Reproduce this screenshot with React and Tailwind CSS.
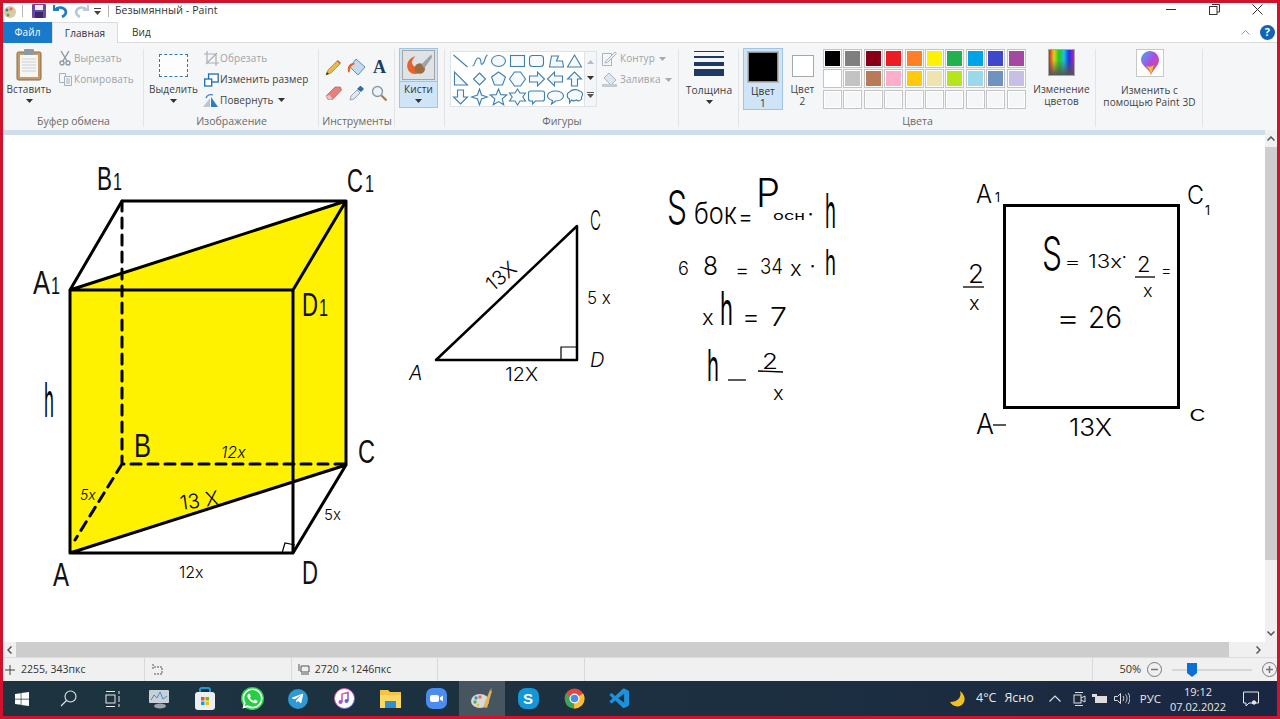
import React from "react";
import { FaWhatsapp, FaTelegramPlane, FaWindows } from "react-icons/fa";
import { VscVscode } from "react-icons/vsc";

const Caret = ({ c = "#333" }) => (
  <svg width="7" height="4" viewBox="0 0 7 4"><path d="M0 0h7L3.5 4z" fill={c} /></svg>
);

function Group({ w, label, children, noBorder }) {
  return (
    <div className={`${w} h-full flex flex-col shrink-0 relative`}>
      <div className="flex-1 flex min-h-0">{children}</div>
      <div className="h-[16px] text-center text-[10.500px] leading-[14px] text-[#6a6a6a]">{label}</div>
      {!noBorder && <div className="absolute right-0 top-[3px] bottom-[3px] w-px bg-[#e1e3e6]" />}
    </div>
  );
}

const Cut = () => (
  <svg width="12" height="15" viewBox="0 0 12 15" fill="none" stroke="#8d9aa6" strokeWidth="1.4">
    <path d="M2 0l6 10M10 0L4 10" /><circle cx="3" cy="12" r="2" /><circle cx="9" cy="12" r="2" />
  </svg>
);
const Copy = () => (
  <svg width="15" height="15" viewBox="0 0 15 15" fill="#f4f6f8" stroke="#a4b0bc">
    <path d="M1.5 1.5h6v9h-6z" /><path d="M6.5 4.5h7v9h-7z" /><path d="M8 7h4M8 9h4M8 11h4" />
  </svg>
);
const Crop = () => (
  <svg width="15" height="15" viewBox="0 0 15 15" fill="none" stroke="#a7b0ba" strokeWidth="1.2">
    <path d="M3 0v12h12M0 3h12v12M2 13L13 2" />
  </svg>
);
const Resize = () => (
  <svg width="15" height="14" viewBox="0 0 15 14" fill="#fff" stroke="#1f6eb5" strokeWidth="1.3">
    <rect x="4.6" y="1" width="9.6" height="8" /><rect x="0.7" y="6" width="7" height="7" />
  </svg>
);
const Rotate = () => (
  <svg width="16" height="15" viewBox="0 0 16 15">
    <path d="M8 4l7 10H8z" fill="#2f7dbd" /><path d="M7 5L0 14h7z" fill="#b9c7d2" />
    <path d="M3 5c1-3 4-4 7-3" stroke="#2f7dbd" fill="none" strokeWidth="1.3" />
  </svg>
);

const Pencil = () => (
  <svg width="17" height="17" viewBox="0 0 17 17">
    <path d="M1 16l2-5 9-9 3 3-9 9z" fill="#e9b949" stroke="#a67c2c" strokeWidth=".7" />
    <path d="M12 2l3 3 1-1-3-3z" fill="#d05c4d" /><path d="M1 16l1-3 2 2z" fill="#333" />
  </svg>
);
const Bucket = () => (
  <svg width="20" height="19" viewBox="0 0 20 19">
    <path d="M9 1l9 8-7 8-8-8z" fill="#c6dcec" stroke="#5e8db2" />
    <path d="M7 5C2 5 0 9 1 14c1 1 2 0 2-2 0-3 2-5 5-6z" fill="#e8622b" />
  </svg>
);
const TextA = () => (
  <span className="font-['Liberation_Serif',serif] font-bold text-[18px] leading-none text-[#1d3e63]">A</span>
);
const Eraser = () => (
  <svg width="17" height="15" viewBox="0 0 17 15">
    <path d="M1 10L10 1h5.5l1 3-9 9.5H3z" fill="#e77f80" stroke="#b85a5c" strokeWidth=".7" />
    <path d="M1 10l2.5 3.5h4L5 9z" fill="#f1c0c0" />
  </svg>
);
const Picker = () => (
  <svg width="17" height="17" viewBox="0 0 17 17">
    <path d="M2 15l1-4 6-6 3 3-6 6z" fill="#dfe8ef" stroke="#7f94a6" strokeWidth=".8" />
    <path d="M9 4l3-3 1 0 3 3-3 3z" fill="#2e6ea6" />
  </svg>
);
const Mag = () => (
  <svg width="17" height="17" viewBox="0 0 17 17" fill="none">
    <circle cx="6.5" cy="6.5" r="5" stroke="#8c98a4" strokeWidth="1.4" fill="#eaf3fa" />
    <path d="M10.5 10.5l5 5" stroke="#b07a3d" strokeWidth="2.2" />
  </svg>
);

const shapePaths = [
  <path d="M2 3l14 12" />,
  <path d="M2 14c3 0 2-8 6-8s1 8 4 6 2-8 5-9" />,
  <ellipse cx="9" cy="9" rx="7" ry="5.5" />,
  <rect x="2" y="3.5" width="14" height="11" />,
  <rect x="2" y="3.5" width="14" height="11" rx="3" />,
  <path d="M3 15l2-11h7l-2 5h6l1 6z" />,
  <path d="M9 3l7 12H2z" />,
  <path d="M3 2v13h13z" />,
  <path d="M9 3l6 6-6 6-6-6z" />,
  <path d="M9 2l7 5-3 8H5L2 7z" />,
  <path d="M6 2h6l5 7-5 7H6L1 9z" />,
  <path d="M2 6h8V2l7 7-7 7v-4H2z" />,
  <path d="M16 6H8V2L1 9l7 7v-4h8z" />,
  <path d="M6 16V9H2l7-7 7 7h-4v7z" />,
  <path d="M6 2v7H2l7 7 7-7h-4V2z" />,
  <path d="M9 1l2 6 6 2-6 2-2 6-2-6-6-2 6-2z" />,
  <path d="M9 1l2.3 5.6 6 .4-4.600 3.900 1.500 5.900L9 13.600 3.800 16.800l1.500-5.900L.7 7l6-.4z" />,
  <path d="M9 1l2.500 4H17l-2.700 4L17 13h-5.500L9 17l-2.500-4H1l2.700-4L1 5h5.500z" />,
  <path d="M3 3h12a2 2 0 012 2v6a2 2 0 01-2 2H8l-3 3v-3H3a2 2 0 01-2-2V5a2 2 0 012-2z" />,
  <path d="M9 3c4.500 0 8 2 8 5s-3.500 5-8 5l-4 3 1-3.500C3 11.500 1 10 1 8c0-3 3.500-5 8-5z" />,
  <path d="M4 4c2-3 8-3 10-1 3 0 4 4 2 6 1 3-3 5-5 3-2 1-4 1-5 0l-2 3v-4C1 10 1 5 4 4z" />,
];

const Swatch = ({ c }) => (
  <div className="w-[19px] h-[19px] border border-[#c4c4c4] bg-white p-px">
    <div className="w-full h-full" style={c ? { background: c } : { background: "#f5f6f7" }} />
  </div>
);
const row1 = ["#000000", "#7f7f7f", "#880015", "#ed1c24", "#ff7f27", "#fff200", "#22b14c", "#00a2e8", "#3f48cc", "#a349a4"];
const row2 = ["#ffffff", "#c3c3c3", "#b97a57", "#ffaec9", "#ffc90e", "#efe4b0", "#b5e61d", "#99d9ea", "#7092be", "#c8bfe7"];

function TitleBar() {
  return (
    <div className="h-[19px] flex items-center bg-white shrink-0 relative pb-[3px]">
      <svg width="14" height="15" viewBox="0 0 14 15" className="ml-0">
        <ellipse cx="7" cy="8" rx="6" ry="6" fill="#d9c9a8" /><circle cx="4" cy="6" r="1.500" fill="#2f7dbd" /><circle cx="8" cy="5" r="1.500" fill="#e8703a" /><circle cx="5" cy="11" r="1.500" fill="#5aa84a" />
      </svg>
      <div className="w-px h-[12px] bg-[#b5b5b5] ml-[5px]" />
      <svg width="14" height="14" viewBox="0 0 14 14" className="ml-[9px]"><rect width="14" height="14" rx="1" fill="#6a4a9e" /><rect x="3" y="1" width="8" height="5" fill="#e8eef5" /><rect x="3" y="8" width="8" height="6" fill="#3a2a6a" /></svg>
      <svg width="15" height="14" viewBox="0 0 15 14" fill="none" className="ml-[7px]"><path d="M1 1v5h5" stroke="#1d7cc8" strokeWidth="2.200" /><path d="M2 6c3-4 10-3 11 2 0 3-2 4-4 5" stroke="#1d7cc8" strokeWidth="2.600" /></svg>
      <svg width="15" height="14" viewBox="0 0 15 14" fill="none" className="ml-[6px]"><path d="M14 1v5H9" stroke="#b8c9d8" strokeWidth="2.200" /><path d="M13 6C10 2 3 3 2 8c0 3 2 4 4 5" stroke="#b8c9d8" strokeWidth="2.600" /></svg>
      <div className="ml-[5px] flex flex-col items-center gap-[2px]"><div className="w-[7px] h-px bg-[#444]" /><Caret c="#444" /></div>
      <div className="w-px h-[12px] bg-[#b5b5b5] ml-[7px]" />
      <span className="ml-[6px] text-[10.500px] tracking-[.1px] text-[#333]">Безымянный - Paint</span>
      <div className="ml-auto flex items-center text-[#333] mr-[14px] mb-[3px]">
        <div className="w-[10px] h-px bg-[#333]" />
        <svg width="11" height="11" viewBox="0 0 11 11" fill="#fff" stroke="#333" className="ml-[33px]"><path d="M3 .500h7.500V8H8" /><rect x=".5" y="2.500" width="7.500" height="8" /></svg>
        <svg width="11" height="11" viewBox="0 0 11 11" stroke="#333" className="ml-[32px]"><path d="M.5.500l10 10M10.500.500l-10 10" /></svg>
      </div>
    </div>
  );
}

function Tabs() {
  return (
    <div className="h-[21px] flex bg-white shrink-0 text-[10px] tracking-[.1px] relative border-b border-[#dadbdc]">
      <div className="w-[49px] h-[21px] bg-[#1979ca] text-white flex items-center justify-center">Файл</div>
      <div className="w-[66px] h-[21px] z-10 bg-[#f5f6f7] border border-b-0 border-[#dadbdc] flex items-center justify-center text-[#333]">Главная</div>
      <div className="ml-[14px] flex items-center text-[#333]">Вид</div>
      <div className="ml-auto flex items-center mr-[2px]">
        <svg width="9" height="5" viewBox="0 0 9 5" fill="none" stroke="#999" className="mr-[10px]"><path d="M.5 4.500l4-4 4 4" /></svg>
        <div className="w-[15px] h-[15px] rounded-full bg-[#1564b3] text-white font-bold text-[11px] flex items-center justify-center">?</div>
      </div>
    </div>
  );
}

function SmallRow({ icon, text, disabled, caret }) {
  return (
    <div className="h-[21px] flex items-center">
      <div className="w-[16px] flex justify-center">{icon}</div>
      <span className={`ml-[1px] text-[10px] tracking-[.1px] ${disabled ? "text-[#9fa3a8]" : "text-[#3f3f3f]"}`}>{text}</span>
      {caret && <span className="ml-[4px] mb-[2px]"><Caret /></span>}
    </div>
  );
}

function Ribbon() {
  return (
    <div className="h-[87px] flex bg-[#f5f6f7] shrink-0 pt-[3px]">
      <Group w="w-[141px]" label="Буфер обмена">
        <div className="w-[52px] flex flex-col items-center pt-[3px]">
          <svg width="26" height="32" viewBox="0 0 26 32">
            <rect x="1" y="3" width="24" height="28" rx="1.500" fill="#c49a6c" stroke="#8a6a40" />
            <rect x="4" y="6" width="18" height="22" fill="#f7f7f2" />
            <path d="M6 10h14M6 13h14M6 16h14M6 19h14M6 22h14" stroke="#c9ced3" />
            <rect x="8" y="0" width="10" height="6" rx="1" fill="#8d9aa6" />
          </svg>
          <span className="text-[10px] tracking-[.1px] leading-[14px] text-[#3f3f3f] mt-[1px]">Вставить</span>
          <span className="mt-[3px]"><Caret /></span>
        </div>
        <div className="pl-[2px] pt-[2px] flex flex-col">
          <SmallRow icon={<Cut />} text="Вырезать" disabled />
          <SmallRow icon={<Copy />} text="Копировать" disabled />
        </div>
      </Group>
      <Group w="w-[175px]" label="Изображение">
        <div className="w-[59px] flex flex-col items-center pt-[8px]">
          <div className="w-[29px] h-[23px] border border-dashed border-[#3b76ab] bg-[#fdfdfd]" />
          <span className="text-[10px] tracking-[.1px] leading-[14px] text-[#3f3f3f] mt-[5px]">Выделить</span>
          <span className="mt-[3px]"><Caret /></span>
        </div>
        <div className="pl-0 pt-[2px] flex flex-col">
          <SmallRow icon={<Crop />} text="Обрезать" disabled />
          <SmallRow icon={<Resize />} text="Изменить размер" />
          <SmallRow icon={<Rotate />} text="Повернуть" caret />
        </div>
      </Group>
      <Group w="w-[76px]" label="Инструменты">
        <div className="grid grid-cols-[repeat(3,23px)] grid-rows-[26px_26px] pl-[3px] pt-[8px] justify-items-center items-center">
          <Pencil /><Bucket /><TextA /><Eraser /><Picker /><Mag />
        </div>
      </Group>
      <Group w="w-[50px]" label="">
        <div className="ml-[4px] mt-[2px] w-[39px] h-[60px] bg-[#cfe4f6] border border-[#9cc5e8] flex flex-col items-center">
          <svg width="33" height="30" viewBox="0 0 33 32" className="mt-[1px] bg-[#dfe3e6] border border-[#a5a5a5]">
            <path d="M4 20c-2-7 3-13 9-14-3 3-6 7-2 11 3 3 7 1 7-1l3 3c0 5-6 8-11 7-3-1-5-3-6-6z" fill="#e8622b" />
            <circle cx="18" cy="20" r="6" fill="#9c6b3f" />
            <path d="M20 15L31 4l1 3-9 13z" fill="#9aa3ab" />
          </svg>
          <div className="w-full h-px bg-[#9cc5e8] mt-[1px]" />
          <span className="text-[10px] tracking-[.1px] leading-[14px] text-[#333]">Кисти</span>
          <span className="mt-[3px]"><Caret /></span>
        </div>
      </Group>
      <Group w="w-[234px]" label="Фигуры">
        <div className="ml-[5px] mt-[5px] w-[147px] h-[56px] border border-[#dfe3e7] bg-white flex">
          <div className="w-[133px] grid grid-cols-[repeat(7,19px)] grid-rows-[repeat(3,18px)]">
            {shapePaths.map((p, i) => (
              <svg key={i} width="19" height="18" viewBox="0 0 18 18" fill="#f6fafd" stroke="#3f7fb0" strokeWidth="1.100">{p}</svg>
            ))}
          </div>
          <div className="flex-1 bg-[#f4f5f6] border-l border-[#dfe3e7] flex flex-col items-center justify-around py-[2px]">
            <svg width="7" height="4" viewBox="0 0 7 4"><path d="M0 4h7L3.500 0z" fill="#bbb" /></svg>
            <Caret />
            <div className="flex flex-col items-center gap-[1px]"><div className="w-[7px] h-px bg-[#555]" /><Caret c="#555" /></div>
          </div>
        </div>
        <div className="ml-[5px] pt-[2px] flex flex-col">
          <div className="h-[21px] flex items-center">
            <svg width="15" height="15" viewBox="0 0 15 15" fill="none" stroke="#aab4be"><path d="M.5 2.500h9v12h-9z" /><path d="M4 10l9-9 1.500 1.500-9 9L3 12z" fill="#eef1f4" /></svg>
            <span className="ml-[3px] text-[10px] tracking-[.1px] text-[#9fa3a8]">Контур</span>
            <span className="ml-[4px]"><Caret c="#aaa" /></span>
          </div>
          <div className="h-[21px] flex items-center">
            <svg width="16" height="15" viewBox="0 0 16 15"><path d="M7 1l7 7-5 5-7-7z" fill="#dfe7ee" stroke="#aab4be" /><rect x="0" y="12" width="15" height="3" fill="#c3ccd4" /></svg>
            <span className="ml-[2px] text-[10px] tracking-[.1px] text-[#9fa3a8]">Заливка</span>
            <span className="ml-[4px]"><Caret c="#aaa" /></span>
          </div>
        </div>
      </Group>
      <Group w="w-[60px]" label="">
        <div className="w-full flex flex-col items-center pt-[5px]">
          <div className="w-[30px] h-px bg-[#1f3864]" />
          <div className="w-[30px] h-[2px] bg-[#1f3864] mt-[4px]" />
          <div className="w-[30px] h-[4px] bg-[#1f3864] mt-[4px]" />
          <div className="w-[30px] h-[7px] bg-[#1f3864] mt-[3px]" />
          <span className="text-[10.300px] tracking-[.1px] leading-[14px] text-[#3f3f3f] mt-[7px]">Толщина</span>
          <span className="mt-[3px]"><Caret /></span>
        </div>
      </Group>
      <Group w="w-[357px]" label="Цвета">
        <div className="ml-[4px] mt-[2px] w-[40px] h-[62px] bg-[#cfe4f6] border border-[#9cc5e8] flex flex-col items-center">
          <div className="mt-[3px] w-[30px] h-[30px] bg-black border border-[#8f8f8f] shadow-[0_0_0_1px_#bbb]" />
          <span className="text-[10px] tracking-[.1px] leading-[12px] text-[#333] mt-[3px] text-center">Цвет<br />1</span>
        </div>
        <div className="ml-[0px] mt-[2px] w-[39px] flex flex-col items-center">
          <div className="mt-[7px] w-[22px] h-[22px] bg-white border border-[#a8a8a8]" />
          <span className="text-[10px] tracking-[.1px] leading-[12px] text-[#3f3f3f] mt-[6px] text-center">Цвет<br />2</span>
        </div>
        <div className="mt-[3px] ml-[1px] w-[204px] grid grid-cols-[repeat(10,19px)] gap-x-[1.400px] gap-y-[1.400px] content-start">
          {row1.map((c) => <Swatch key={c} c={c} />)}
          {row2.map((c) => <Swatch key={c} c={c} />)}
          {Array.from({ length: 10 }).map((_, i) => <Swatch key={i} />)}
        </div>
        <div className="flex-1 flex flex-col items-center pt-[3px]">
          <div className="w-[27px] h-[27px] border border-[#a8a8a8] bg-[linear-gradient(90deg,#d81e1e,#e0d020,#1ec81e,#20c0e0,#2030e0,#c020c0)] relative overflow-hidden">
            <div className="absolute inset-0 bg-[linear-gradient(180deg,transparent_40%,#555)]" />
          </div>
          <span className="text-[10px] tracking-[.1px] leading-[12px] text-[#3f3f3f] mt-[7px] text-center">Изменение<br />цветов</span>
        </div>
      </Group>
      <Group w="w-[107px]" label="">
        <div className="w-full flex flex-col items-center pt-[3px]">
          <div className="w-[28px] h-[28px] bg-white border border-[#c8c8c8] flex items-center justify-center">
            <svg width="18" height="24" viewBox="0 0 18 24">
              <defs><linearGradient id="p3d" x1="0" y1="0" x2="1" y2="1"><stop offset="0" stopColor="#3fb3f0" /><stop offset=".5" stopColor="#b048e0" /><stop offset="1" stopColor="#f0503c" /></linearGradient></defs>
              <path d="M9 0c5 0 9 4 9 9 0 6-6 9-8 15C9 18 0 15 0 9c0-5 4-9 9-9z" fill="url(#p3d)" />
              <path d="M10 24c-1-5-3-7-5-9 3 1 6 1 8-1-1 3-2 6-3 10z" fill="#f5c030" />
            </svg>
          </div>
          <span className="text-[10px] tracking-[.1px] leading-[12px] text-[#3f3f3f] mt-[7px] text-center whitespace-nowrap">Изменить с<br />помощью Paint 3D</span>
        </div>
      </Group>
    </div>
  );
}

const Hand = ({ x, y, s = 20, len, w = 300, rot, children, it }) => (
  <text
    x={x}
    y={y}
    fontSize={s}
    fontWeight={w}
    fontStyle={it ? "italic" : "normal"}
    fontFamily="Inter, 'Liberation Sans', sans-serif"
    fill="#000"
    opacity="0.99"
    textLength={len}
    lengthAdjust={len ? "spacingAndGlyphs" : undefined}
    transform={rot ? `rotate(${rot} ${x} ${y})` : undefined}
  >
    {children}
  </text>
);
const Lab = ({ x, y, s = 34, len, children }) => (
  <text x={x} y={y} fontSize={s} fontFamily="'Liberation Sans', sans-serif" fill="#111" textLength={len} lengthAdjust="spacingAndGlyphs">{children}</text>
);

function Drawing() {
  return (
    <svg viewBox="3 135 1262 507" width="1262" height="507" className="block">
      <polygon points="70,290 346,201 346,465 70,553" fill="#fff200" />
      <g stroke="#000" strokeWidth="3" fill="none" strokeLinecap="round" strokeLinejoin="round">
        <path d="M70 290L122 201H346V465L293 553H70V290H293V553M293 290L346 201M70 290L346 201M70 553L346 465" />
        <path d="M122 201V464H346M122 464L75 540" strokeDasharray="10 7" />
      </g>
      <path d="M282 553l3-10 10 2" stroke="#000" strokeWidth="1.200" fill="none" />
      <Lab x={97} y={190} len={15}>B</Lab><Lab x={113} y={190} s={24} len={9}>1</Lab>
      <Lab x={347} y={192} len={16}>C</Lab><Lab x={365} y={192} s={24} len={9}>1</Lab>
      <Lab x={33} y={294} len={17}>A</Lab><Lab x={51} y={294} s={24} len={9}>1</Lab>
      <Lab x={302} y={316} len={16}>D</Lab><Lab x={319} y={316} s={24} len={9}>1</Lab>
      <Lab x={134} y={457} len={17}>B</Lab>
      <Lab x={358} y={463} len={17}>C</Lab>
      <Lab x={53} y={586} len={16}>A</Lab>
      <Lab x={302} y={584} len={16}>D</Lab>
      <Hand x={44} y={417} s={48} w={400} len={10}>h</Hand>
      <Hand x={221} y={458} s={16} it>12x</Hand>
      <Hand x={80} y={500} s={14} it>5x</Hand>
      <Hand x={181} y={510} s={20} rot={-8}>13 X</Hand>
      <Hand x={324} y={520} s={15}>5x</Hand>
      <Hand x={179} y={578} s={16}>12x</Hand>

      <path d="M436 360L577 226V360Z" stroke="#000" strokeWidth="2.500" fill="none" strokeLinejoin="round" />
      <path d="M561 360v-13h16" stroke="#000" strokeWidth="1.200" fill="none" />
      <Hand x={409} y={380} s={20} it>A</Hand>
      <Hand x={590} y={230} s={27} len={11}>C</Hand>
      <Hand x={493} y={292} s={20} rot={-40}>13X</Hand>
      <Hand x={587} y={304} s={17}>5 x</Hand>
      <Hand x={505} y={381} s={18} len={33}>12X</Hand>
      <Hand x={590} y={367} s={20} it>D</Hand>

      <Hand x={667} y={224} s={46} len={20}>S</Hand>
      <Hand x={694} y={224} s={30} len={43}>бок</Hand>
      <Hand x={738} y={225} s={24} len={15}>=</Hand>
      <Hand x={756} y={207} s={40} len={24}>P</Hand>
      <Hand x={773} y={220} s={12} w={400} len={32}>осн</Hand>
      <Hand x={808} y={220} s={16} w={600}>·</Hand>
      <Hand x={825} y={228} s={48} w={400} len={11}>h</Hand>
      <Hand x={678} y={275} s={18}>6</Hand>
      <Hand x={703} y={275} s={26} len={15}>8</Hand>
      <Hand x={735} y={278} s={22}>=</Hand>
      <Hand x={760} y={274} s={22} len={23}>34</Hand>
      <Hand x={790} y={276} s={22}>x</Hand>
      <Hand x={810} y={272} s={16} w={600}>·</Hand>
      <Hand x={825} y={275} s={36} w={400} len={11}>h</Hand>
      <Hand x={702} y={325} s={22}>x</Hand>
      <Hand x={720} y={325} s={46} w={400} len={13}>h</Hand>
      <Hand x={742} y={326} s={26} len={18}>=</Hand>
      <Hand x={770} y={326} s={26} len={17}>7</Hand>
      <Hand x={707} y={381} s={44} w={400} len={12}>h</Hand>
      <path d="M728 380h18" stroke="#000" strokeWidth="1.300" />
      <Hand x={762} y={369} s={22} len={16}>2</Hand>
      <path d="M758 371l25 1" stroke="#000" strokeWidth="1.300" />
      <Hand x={773} y={400} s={20}>x</Hand>

      <rect x="1004.500" y="205.500" width="174" height="202" fill="none" stroke="#000" strokeWidth="3" />
      <Hand x={976} y={203} s={26} len={16}>A</Hand>
      <Hand x={995} y={202} s={13} w={400} len={5}>1</Hand>
      <Hand x={1187} y={204} s={25} len={17}>C</Hand>
      <Hand x={1205} y={215} s={13} w={400} len={5}>1</Hand>
      <Hand x={968} y={283} s={26}>2</Hand>
      <path d="M963 287h21" stroke="#000" strokeWidth="1.300" />
      <Hand x={969} y={310} s={20}>x</Hand>
      <Hand x={1042} y={270} s={46} len={20}>S</Hand>
      <Hand x={1064} y={268} s={18} len={17}>=</Hand>
      <Hand x={1088} y={268} s={18} len={34}>13x</Hand>
      <Hand x={1122} y={262} s={14} w={600}>·</Hand>
      <Hand x={1137} y={272} s={22}>2</Hand>
      <path d="M1135 277h20" stroke="#000" strokeWidth="1.300" />
      <Hand x={1143} y={297} s={18}>x</Hand>
      <Hand x={1161} y={276} s={16}>=</Hand>
      <Hand x={1056} y={328} s={28} len={24}>=</Hand>
      <Hand x={1088} y={328} s={30} len={34}>26</Hand>
      <Hand x={976} y={434} s={28} len={18}>A</Hand>
      <path d="M993 425h13" stroke="#000" strokeWidth="1.300" />
      <Hand x={1189} y={421} s={22} len={17}>c</Hand>
      <Hand x={1069} y={436} s={24} len={43}>13X</Hand>
    </svg>
  );
}

function StatusBar() {
  return (
    <div className="h-[24px] bg-[#f0f0f0] border-t border-[#dcdcdc] flex items-center text-[10.500px] text-[#333] shrink-0">
      <div className="w-[142px] h-full border-r border-[#d9d9d9] flex items-center">
        <svg width="10" height="10" viewBox="0 0 10 10" stroke="#444" className="ml-[2px]"><path d="M5 0v10M0 5h10" /></svg>
        <span className="ml-[6px]">2255, 343пкс</span>
      </div>
      <div className="w-[147px] h-full border-r border-[#d9d9d9] flex items-center">
        <svg width="13" height="11" viewBox="0 0 13 11" fill="none" stroke="#555" className="ml-[5px]"><path d="M3 0v6M4 3h8v7H4" strokeDasharray="2 1" /></svg>
      </div>
      <div className="w-[146px] h-full border-r border-[#d9d9d9] flex items-center">
        <svg width="13" height="11" viewBox="0 0 13 11" fill="none" stroke="#555" className="ml-[5px]"><path d="M2 0v7M4 2h8v6H4zM4 10h8" /></svg>
        <span className="ml-[5px]">2720 × 1246пкс</span>
      </div>
      <div className="w-[147px] h-full border-r border-[#d9d9d9]" />
      <div className="w-[509px] h-full border-r border-[#d9d9d9]" />
      <span className="ml-[26px] text-[11px]">50%</span>
      <svg width="15" height="15" viewBox="0 0 15 15" fill="none" stroke="#777" className="ml-[6px]"><circle cx="7.500" cy="7.500" r="7" /><path d="M4 7.500h7" strokeWidth="1.500" /></svg>
      <div className="ml-[10px] w-[80px] h-[2px] bg-[#d6d6d6] relative">
        <svg width="10" height="14" viewBox="0 0 10 14" className="absolute left-[15px] -top-[6px]"><path d="M0 0h10v10l-5 4-5-4z" fill="#0a6fd6" /></svg>
      </div>
      <svg width="15" height="15" viewBox="0 0 15 15" fill="none" stroke="#777" className="ml-[10px]"><circle cx="7.500" cy="7.500" r="7" /><path d="M4 7.500h7M7.500 4v7" strokeWidth="1.500" /></svg>
    </div>
  );
}

const Tb = ({ children, active, first }) => (
  <div className={`w-[46px] h-full flex items-center justify-center shrink-0 ${active ? "bg-[#46555f]" : ""} ${first ? "-ml-[4px]" : ""}`}>{children}</div>
);

function Taskbar() {
  return (
    <div className="h-[35px] flex items-center bg-[linear-gradient(90deg,#1d3440,#1c2f40_60%,#1a2742)] shrink-0 text-white overflow-hidden">
      <Tb first><FaWindows size={16} color="#fff" /></Tb>
      <Tb>
        <svg width="17" height="17" viewBox="0 0 17 17" fill="none" stroke="#e8e8e8" strokeWidth="1.100"><circle cx="10.500" cy="6.500" r="5.500" /><path d="M6.500 10.500L1 16" /></svg>
      </Tb>
      <Tb>
        <svg width="16" height="16" viewBox="0 0 16 16" fill="none" stroke="#e8e8e8" className="-ml-[3px]"><path d="M1 .5h9M1 15.500h9M14 0v3M14 5v6M14 13v3" /><rect x="1" y="4" width="9" height="8" /></svg>
      </Tb>
      <Tb>
        <svg width="22" height="20" viewBox="0 0 22 20" className="-ml-[3px]"><rect x="1" y="1" width="20" height="13" rx="1" fill="#c8d0d6" /><path d="M3 11l3-5 3 3 3-6 3 7 4-3" stroke="#3f8fd0" fill="none" /><ellipse cx="12" cy="17" rx="6" ry="2.500" fill="#9aa4ab" /></svg>
      </Tb>
      <Tb>
        <svg width="22" height="24" viewBox="0 0 22 24" className="-ml-[2px]"><path d="M6 6V3a2 2 0 012-2h6a2 2 0 012 2v3" stroke="#1d9bd6" strokeWidth="2" fill="none" /><rect x="1" y="5" width="20" height="18" rx="3" fill="#eceff1" /><rect x="7" y="10" width="3.500" height="3.500" fill="#f25022" /><rect x="11.500" y="10" width="3.500" height="3.500" fill="#7fba00" /><rect x="7" y="14.500" width="3.500" height="3.500" fill="#00a4ef" /><rect x="11.500" y="14.500" width="3.500" height="3.500" fill="#ffb900" /></svg>
      </Tb>
      <Tb><div className="w-[23px] h-[23px] rounded-full bg-[#25cf43] flex items-center justify-center"><FaWhatsapp size={23} color="#fff" /></div></Tb>
      <Tb><div className="w-[20px] h-[20px] rounded-full bg-[#2d9ad6] flex items-center justify-center pr-[1px]"><FaTelegramPlane size={13} color="#fff" /></div></Tb>
      <Tb>
        <svg width="21" height="21" viewBox="0 0 21 21"><defs><linearGradient id="itn" x1="0" y1="0" x2="1" y2="1"><stop offset="0" stopColor="#f06a8a" /><stop offset=".5" stopColor="#b050d0" /><stop offset="1" stopColor="#4a80e0" /></linearGradient></defs><circle cx="10.500" cy="10.500" r="10" fill="#fff" stroke="url(#itn)" strokeWidth="1" /><path d="M8 14V6l6-1.500V13" stroke="url(#itn)" strokeWidth="1.600" fill="none" /><circle cx="6.500" cy="14" r="2" fill="#b050d0" /><circle cx="12.500" cy="13" r="2" fill="#6a60d8" /></svg>
      </Tb>
      <Tb>
        <svg width="21" height="19" viewBox="0 0 21 19"><path d="M0 1h8l2 2h11v16H0z" fill="#f4c545" /><rect x="0" y="6" width="21" height="13" fill="#fbd764" /><rect x="5" y="12" width="11" height="7" fill="#2f8fd0" /></svg>
      </Tb>
      <Tb>
        <div className="w-[21px] h-[21px] rounded-[7px] bg-[#4a8cf0] flex items-center justify-center gap-[1px]">
          <div className="w-[9px] h-[7px] rounded-[2px] bg-white" />
          <svg width="3" height="7" viewBox="0 0 3 7"><path d="M0 2.500L3 .5v6L0 4.500z" fill="#fff" /></svg>
        </div>
      </Tb>
      <Tb active>
        <svg width="24" height="24" viewBox="0 0 24 24"><ellipse cx="10" cy="14" rx="9" ry="7" fill="#d6dadd" /><circle cx="6" cy="11" r="1.700" fill="#3f8fd0" /><circle cx="10" cy="10" r="1.700" fill="#e8703a" /><circle cx="5" cy="15" r="1.700" fill="#5aa84a" /><circle cx="8" cy="18" r="1.500" fill="#f0c030" /><path d="M13 20L20 3l2 1-5 17z" fill="#e3b35a" /><path d="M19 3l3-2 0 3z" fill="#c0642c" /></svg>
      </Tb>
      <Tb><div className="w-[21px] h-[21px] rounded-[8px] bg-[#1497d8] flex items-center justify-center"><span className="font-['Liberation_Sans',sans-serif] font-bold text-[15px] leading-none text-white">S</span></div></Tb>
      <Tb>
        <svg width="21" height="21" viewBox="0 0 21 21"><circle cx="10.500" cy="10.500" r="10" fill="#e8453c" /><path d="M10.500 10.500L1.800 15.500A10 10 0 0010 20.500z" fill="#3aa757" /><path d="M10.500 10.500L10 20.500A10 10 0 0020.500 10.500 10 10 0 0019.200 5.500z" fill="#fbc02d" /><path d="M1.800 5.500L1.800 15.500 10.500 10.500z" fill="#3aa757" /><circle cx="10.500" cy="10.500" r="5" fill="#fff" /><circle cx="10.500" cy="10.500" r="3.800" fill="#4a8cf0" /></svg>
      </Tb>
      <Tb><VscVscode size={24} color="#1c92dc" /></Tb>

      <div className="ml-auto flex items-center h-full">
        <svg width="18" height="18" viewBox="0 0 18 18"><path d="M11 1c2 6-2 11-10 11 2 4 7 5.500 11 3.500 5-3 5-10-1-14.500z" fill="#f3c11f" /></svg>
        <span className="ml-[9px] text-[12.500px] text-[#e8e8e8]">4°C</span>
        <span className="ml-[8px] text-[12.500px] text-[#e8e8e8]">Ясно</span>
        <svg width="12" height="7" viewBox="0 0 12 7" fill="none" stroke="#ddd" strokeWidth="1.200" className="ml-[15px]"><path d="M.5 6.500L6 1l5.500 5.500" /></svg>
        <svg width="13" height="16" viewBox="0 0 13 16" fill="none" stroke="#ddd" className="ml-[12px]"><path d="M2 1.500h8M2 14.500h8" /><rect x="1" y="4" width="7" height="8" /><path d="M8 7l4-2v6L8 9" /></svg>
        <svg width="15" height="12" viewBox="0 0 15 12" className="ml-[6px]"><rect x="3" y="3" width="12" height="7" fill="#ddd" /><path d="M0 1h5v3H0z" fill="#ddd" /></svg>
        <svg width="16" height="13" viewBox="0 0 16 13" fill="none" stroke="#ddd" className="ml-[7px]"><path d="M.5 4.500h3l3-3v10l-3-3h-3zM9 4c1 1.500 1 3.500 0 5M11.500 2.500c2 2.500 2 5.500 0 8M14 1c2.500 3 2.500 8 0 11" /></svg>
        <span className="ml-[10px] text-[11.500px] text-[#e8e8e8]">РУС</span>
        <div className="ml-[8px] w-[58px] text-center text-[11px] leading-[15px] text-[#e8e8e8]">19:12<br />07.02.2022</div>
        <div className="w-[46px] flex justify-center pl-[2px] mr-[4px]">
          <svg width="16" height="16" viewBox="0 0 16 16" fill="none" stroke="#e8e8e8"><path d="M.5 1h15v11H6l-3 3v-3H.5z" /><circle cx="11" cy="11.500" r="1.700" fill="#e8e8e8" /></svg>
        </div>
      </div>
    </div>
  );
}

export default function App() {
  return (
    <div className="w-[1280px] h-[719px] border-[3px] border-[#d0122c] bg-white flex flex-col overflow-hidden font-['Open_Sans','Noto_Sans',sans-serif]">
      <TitleBar />
      <Tabs />
      <Ribbon />
      <div className="flex-1 flex min-h-0">
        <div className="flex-1 flex flex-col min-w-0">
          <div className="h-[5px] bg-[#d0dcea] shrink-0" />
          <div className="flex-1 bg-white overflow-hidden min-h-0"><Drawing /></div>
        </div>
        <div className="w-[12px] bg-[#f0f0f0] flex flex-col items-center shrink-0 relative">
          <div className="h-[17px] w-full flex items-center justify-center">
            <svg width="8" height="5" viewBox="0 0 8 5" fill="none" stroke="#555" strokeWidth="1.500"><path d="M.5 4.500L4 1l3.500 3.500" /></svg>
          </div>
          <div className="w-full h-[413px] bg-[#cdcdcd]" />
          <div className="mt-auto h-[17px] flex items-center">
            <svg width="8" height="5" viewBox="0 0 8 5" fill="none" stroke="#555" strokeWidth="1.500"><path d="M.5.500L4 4l3.500-3.500" /></svg>
          </div>
        </div>
      </div>
      <div className="h-[15px] bg-[#f0f0f0] flex items-center shrink-0">
        <div className="w-[13px] flex justify-center">
          <svg width="5" height="8" viewBox="0 0 5 8" fill="none" stroke="#555" strokeWidth="1.500"><path d="M4.500.5L1 4l3.500 3.500" /></svg>
        </div>
        <div className="w-[1213px] h-full bg-[#cdcdcd]" />
        <div className="flex-1 flex justify-end pr-[16px]">
          <svg width="5" height="8" viewBox="0 0 5 8" fill="none" stroke="#555" strokeWidth="1.500"><path d="M.5.500L4 4 .5 7.500" /></svg>
        </div>
      </div>
      <StatusBar />
      <Taskbar />
    </div>
  );
}
